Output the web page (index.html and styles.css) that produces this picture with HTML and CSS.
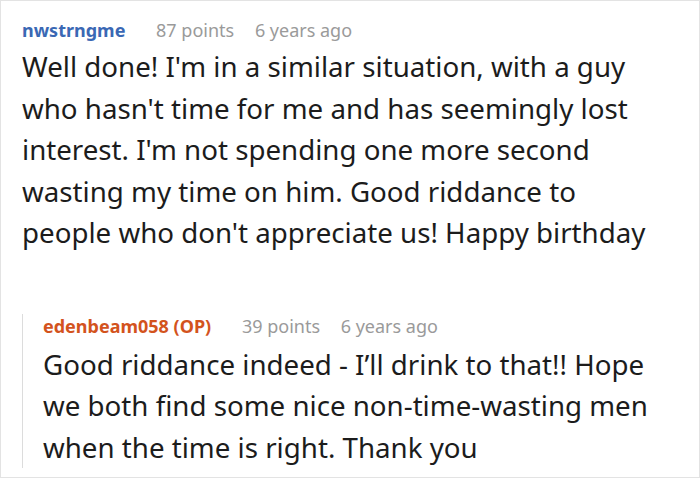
FILE: index.html
```html
<!DOCTYPE html>
<html lang="en">
<head>
<meta charset="utf-8">
<title>Comments</title>
<link rel="stylesheet" href="styles.css">
</head>
<body>
<div class="thread">
  <div class="comment">
    <div class="meta">
      <span class="user">nwstrngme</span>
      <span class="points">87 points</span>
      <span class="time">6 years ago</span>
    </div>
    <p class="text">Well done! I'm in a similar situation, with a guy who hasn't time for me and has seemingly lost interest. I'm not spending one more second wasting my time on him. Good riddance to people who don't appreciate us! Happy birthday</p>
    <div class="reply">
      <div class="meta">
        <span class="user op">edenbeam058 (OP)</span>
        <span class="points">39 points</span>
        <span class="time">6 years ago</span>
      </div>
      <p class="text reply-text">Good riddance indeed - I’ll drink to that!! Hope we both find some nice non-time-wasting men when the time is right. Thank you</p>
    </div>
  </div>
</div>
</body>
</html>
```

FILE: styles.css
```css
html, body {
  margin: 0;
  padding: 0;
  background: #fff;
}

.thread {
  box-sizing: border-box;
  width: 700px;
  height: 478px;
  border: 1px solid #e3e3e3;
  padding: 17px 39px 0 21px;
  overflow: hidden;
  font-family: "Noto Sans", "Open Sans", sans-serif;
  color: #1c1c1c;
}

.meta {
  font-size: 18px;
  line-height: 24px;
  white-space: nowrap;
}

.user {
  font-weight: 700;
  color: #3a68b4;
  margin-right: 26px;
}

.user.op {
  color: #d3531d;
}

.points,
.time {
  color: #9a9a9a;
}

.points {
  margin-right: 16px;
}

.text {
  margin: 4px 0 0;
  font-size: 27.7px;
  line-height: 41.5px;
}

.reply {
  margin-top: 71px;
  border-left: 1px solid #dcdcdc;
  padding-left: 20px;
}

.reply .meta {
  margin-top: -11px;
}

.reply-text {
  margin-top: 6px;
  margin-bottom: -11px;
}
```
